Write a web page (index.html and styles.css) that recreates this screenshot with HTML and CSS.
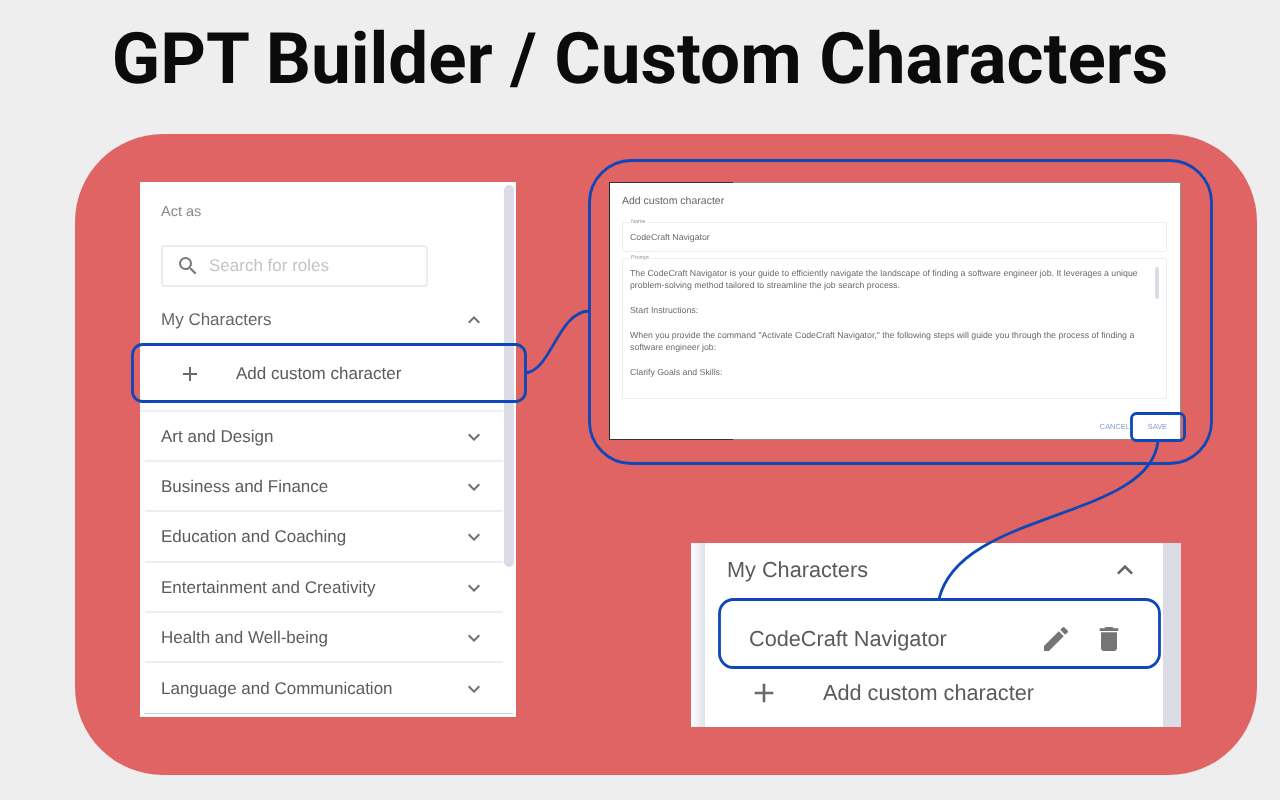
FILE: index.html
```html
<!DOCTYPE html>
<html lang="en">
<head>
<meta charset="utf-8">
<title>GPT Builder / Custom Characters</title>
<link rel="stylesheet" href="styles.css">
</head>
<body>
<main class="slide">
  <h1 class="title">GPT Builder / Custom Characters</h1>
  <section class="stage">
    <div class="picker">
      <div class="picker-scroll"></div>
      <div class="act-as">Act as</div>
      <div class="search">
        <svg class="search-icon" viewBox="0 0 24 24"><path d="M15.5 14h-.79l-.28-.27A6.47 6.47 0 0 0 16 9.5 6.5 6.5 0 1 0 9.5 16c1.61 0 3.09-.59 4.23-1.57l.27.28v.79l5 4.99L20.49 19l-4.99-5zm-6 0C7.01 14 5 11.99 5 9.5S7.01 5 9.5 5 14 7.01 14 9.5 11.99 14 9.5 14z"/></svg>
        <span class="search-text">Search for roles</span>
      </div>
      <div class="row row-mine">
        <span>My Characters</span>
        <svg class="chev" viewBox="0 0 24 24"><path d="M7.41 15.41 12 10.83l4.59 4.58L18 14l-6-6-6 6z"/></svg>
      </div>
      <div class="add-row">
        <svg class="plus" viewBox="0 0 24 24"><path d="M19 13h-6v6h-2v-6H5v-2h6V5h2v6h6v2z"/></svg>
        <span>Add custom character</span>
      </div>
      <ul class="cats">
        <li class="row cat"><span>Art and Design</span><svg class="chev" viewBox="0 0 24 24"><path d="M7.41 8.59 12 13.17l4.59-4.58L18 10l-6 6-6-6z"/></svg></li>
        <li class="row cat"><span>Business and Finance</span><svg class="chev" viewBox="0 0 24 24"><path d="M7.41 8.59 12 13.17l4.59-4.58L18 10l-6 6-6-6z"/></svg></li>
        <li class="row cat"><span>Education and Coaching</span><svg class="chev" viewBox="0 0 24 24"><path d="M7.41 8.59 12 13.17l4.59-4.58L18 10l-6 6-6-6z"/></svg></li>
        <li class="row cat"><span>Entertainment and Creativity</span><svg class="chev" viewBox="0 0 24 24"><path d="M7.41 8.59 12 13.17l4.59-4.58L18 10l-6 6-6-6z"/></svg></li>
        <li class="row cat"><span>Health and Well-being</span><svg class="chev" viewBox="0 0 24 24"><path d="M7.41 8.59 12 13.17l4.59-4.58L18 10l-6 6-6-6z"/></svg></li>
        <li class="row cat"><span>Language and Communication</span><svg class="chev" viewBox="0 0 24 24"><path d="M7.41 8.59 12 13.17l4.59-4.58L18 10l-6 6-6-6z"/></svg></li>
      </ul>
    </div>

    <div class="dialog">
      <div class="dialog-title">Add custom character</div>
      <div class="field field-name">
        <span class="legend">Name</span>
        <span>CodeCraft Navigator</span>
      </div>
      <div class="field field-prompt">
        <span class="legend">Prompt</span>
        <div class="prompt-scroll"></div>
        <p>The CodeCraft Navigator is your guide to efficiently navigate the landscape of finding a software engineer job. It leverages a unique problem-solving method tailored to streamline the job search process.</p>
        <p>Start Instructions:</p>
        <p>When you provide the command "Activate CodeCraft Navigator," the following steps will guide you through the process of finding a software engineer job:</p>
        <p>Clarify Goals and Skills:</p>
      </div>
      <div class="dialog-actions">
        <span>CANCEL</span>
        <span>SAVE</span>
      </div>
    </div>

    <div class="saved">
      <div class="saved-body">
        <div class="saved-head">
          <span>My Characters</span>
          <svg class="saved-chev" viewBox="0 0 24 24"><path d="M7.41 15.41 12 10.83l4.59 4.58L18 14l-6-6-6 6z"/></svg>
        </div>
        <div class="saved-item">
          <span class="saved-name">CodeCraft Navigator</span>
          <svg class="saved-icon" viewBox="0 0 24 24"><path d="M3 17.25V21h3.75L17.81 9.94l-3.75-3.75L3 17.25zM20.71 7.04a1 1 0 0 0 0-1.41l-2.34-2.34a1 1 0 0 0-1.41 0l-1.83 1.83 3.75 3.75 1.83-1.83z"/></svg>
          <svg class="saved-icon" viewBox="0 0 24 24"><path d="M6 19c0 1.1.9 2 2 2h8c1.1 0 2-.9 2-2V7H6v12zM19 4h-3.5l-1-1h-5l-1 1H5v2h14V4z"/></svg>
        </div>
        <div class="saved-add">
          <svg class="saved-plus" viewBox="0 0 24 24"><path d="M19 13h-6v6h-2v-6H5v-2h6V5h2v6h6v2z"/></svg>
          <span>Add custom character</span>
        </div>
      </div>
    </div>

    <svg class="callouts" viewBox="0 0 1280 800">
      <rect x="132.500" y="344.500" width="393" height="57" rx="10"/>
      <rect x="589.500" y="160.500" width="622" height="303" rx="42"/>
      <rect x="1131.500" y="413.500" width="53" height="27" rx="5"/>
      <rect x="719.500" y="599.500" width="440" height="68" rx="14"/>
      <path d="M526 373C552 369 558 312 589 311"/>
      <path d="M1158 441C1150 520 960 510 939 599"/>
    </svg>
  </section>
</main>
</body>
</html>
```
FILE: styles.css
```css
* { box-sizing: border-box; }
html, body { margin: 0; padding: 0; }
body { width: 1280px; height: 800px; overflow: hidden; background: #eeeeee; font-family: "Liberation Sans", Arial, sans-serif; text-rendering: geometricPrecision; }
.slide { width: 1280px; height: 800px; display: flex; flex-direction: column; }
.title { margin: 0; height: 134px; padding-top: 20px; text-align: center; font-family: Roboto, sans-serif; font-weight: 700; font-size: 71px; line-height: 80px; color: #0b0b0b; white-space: nowrap; }
.stage { margin-left: 75px; width: 1182px; height: 641px; border-radius: 88px; background: #e06464; position: relative; }

/* picker (screenshot at left) */
.picker { position: absolute; left: 65px; top: 48px; width: 376px; height: 535px; background: #fff; display: flex; flex-direction: column; padding-left: 21px; color: #5c5c5c; font-size: 17px; filter: blur(0.35px); }
.picker::after { content: ""; position: absolute; left: 4px; right: 3px; bottom: 3px; height: 1px; background: #c2ccc2; }
.picker-scroll { position: absolute; right: 2px; top: 3px; width: 10px; height: 382px; border-radius: 5px; background: #dcdce6; }
.act-as { height: 63px; padding-top: 22px; font-size: 14.500px; line-height: 16px; color: #8a8a8a; }
.search { width: 267px; height: 42px; border: 2px solid #ececec; border-radius: 4px; display: flex; align-items: center; padding-left: 13px; gap: 9px; color: #c4c4c4; }
.search-icon { width: 24px; height: 24px; fill: #777; }
.row { display: flex; align-items: center; justify-content: space-between; }
.row-mine { height: 57px; padding: 9px 30px 0 0; color: #666; }
.chev { width: 24px; height: 24px; fill: #6f6f6f; }
.add-row { height: 68px; margin: 0 13px 0 -21px; display: flex; align-items: center; padding: 0 0 7px 38px; gap: 34px; color: #5a5a5a; border-bottom: 2px solid #f0f0f0; }
.plus { width: 24px; height: 24px; fill: #6a6a6a; }
.cats { list-style: none; margin: 0 0 0 -16px; padding: 0; width: 358px; }
.cat { height: 50.200px; padding: 2px 17px 0 16px; border-bottom: 2px solid #eeeeee; }
.cat:last-child { border-bottom: 0; }

/* dialog */
.dialog { position: absolute; left: 534px; top: 48px; width: 572px; height: 258px; background: linear-gradient(#333, #333) left top / 123px 1px no-repeat, linear-gradient(#333, #333) left bottom / 123px 1px no-repeat, linear-gradient(#8a8f88, #8a8f88) left top / 100% 1px no-repeat, linear-gradient(#8a8f88, #8a8f88) left bottom / 100% 1px no-repeat, #fff; border-left: 1.500px solid #2b2b2b; border-right: 1px solid #8a9a8a; padding: 0 13px 0 12px; color: #6a6a6a; font-size: 8.750px; display: flex; flex-direction: column; filter: blur(0.45px); }
.dialog-title { height: 40px; padding-top: 13px; font-size: 10.500px; line-height: 12px; color: #666; }
.field { position: relative; border: 1px solid #eeeeee; border-radius: 2px; padding: 0 7px; }
.field-name { height: 30px; line-height: 28px; }
.field-prompt { height: 141px; margin-top: 6px; padding-top: 8px; line-height: 12.400px; }
.field-prompt p { margin: 0 14px 12.400px 0; }
.legend { position: absolute; left: 6px; top: -4px; padding: 0 2px; background: #fff; font-size: 5.500px; line-height: 7px; color: #999; }
.prompt-scroll { position: absolute; right: 7px; top: 8px; width: 4px; height: 32px; background: #dcdce6; border-radius: 2px; }
.dialog-actions { display: flex; justify-content: flex-end; gap: 18px; padding: 22px 0 0; font-size: 7.400px; line-height: 12px; color: #7f9bd6; }

/* saved list */
.saved { position: absolute; left: 616px; top: 409px; width: 490px; height: 184px; background: #fff; padding: 0 18px 0 14px; }
.saved-body { height: 100%; position: relative; color: #5a5a5a; font-size: 21.700px; filter: blur(0.3px); }
.saved::before { content: ""; position: absolute; left: 0; top: 0; bottom: 0; width: 14px; background: linear-gradient(90deg, #fff, #dfe1ea); }
.saved::after { content: ""; position: absolute; right: 0; top: 0; bottom: 0; width: 18px; background: #dcdce6; }
.saved-head { height: 53px; display: flex; align-items: center; justify-content: space-between; padding: 0 22px 0 22px; }
.saved-chev { width: 32px; height: 32px; fill: #666; }
.saved-item { height: 70px; margin-top: 4px; display: flex; align-items: center; padding: 8px 38px 0 44px; }
.saved-name { flex: 1; }
.saved-icon { width: 32px; height: 32px; fill: #757575; margin-left: 21px; }
.saved-add { display: flex; align-items: center; height: 45px; padding-left: 43px; gap: 43px; }
.saved-plus { width: 32px; height: 32px; fill: #6a6a6a; }

/* callouts */
.callouts { position: absolute; left: -75px; top: -134px; width: 1280px; height: 800px; pointer-events: none; fill: none; stroke: #0d47b8; stroke-width: 2.800px; }
```
